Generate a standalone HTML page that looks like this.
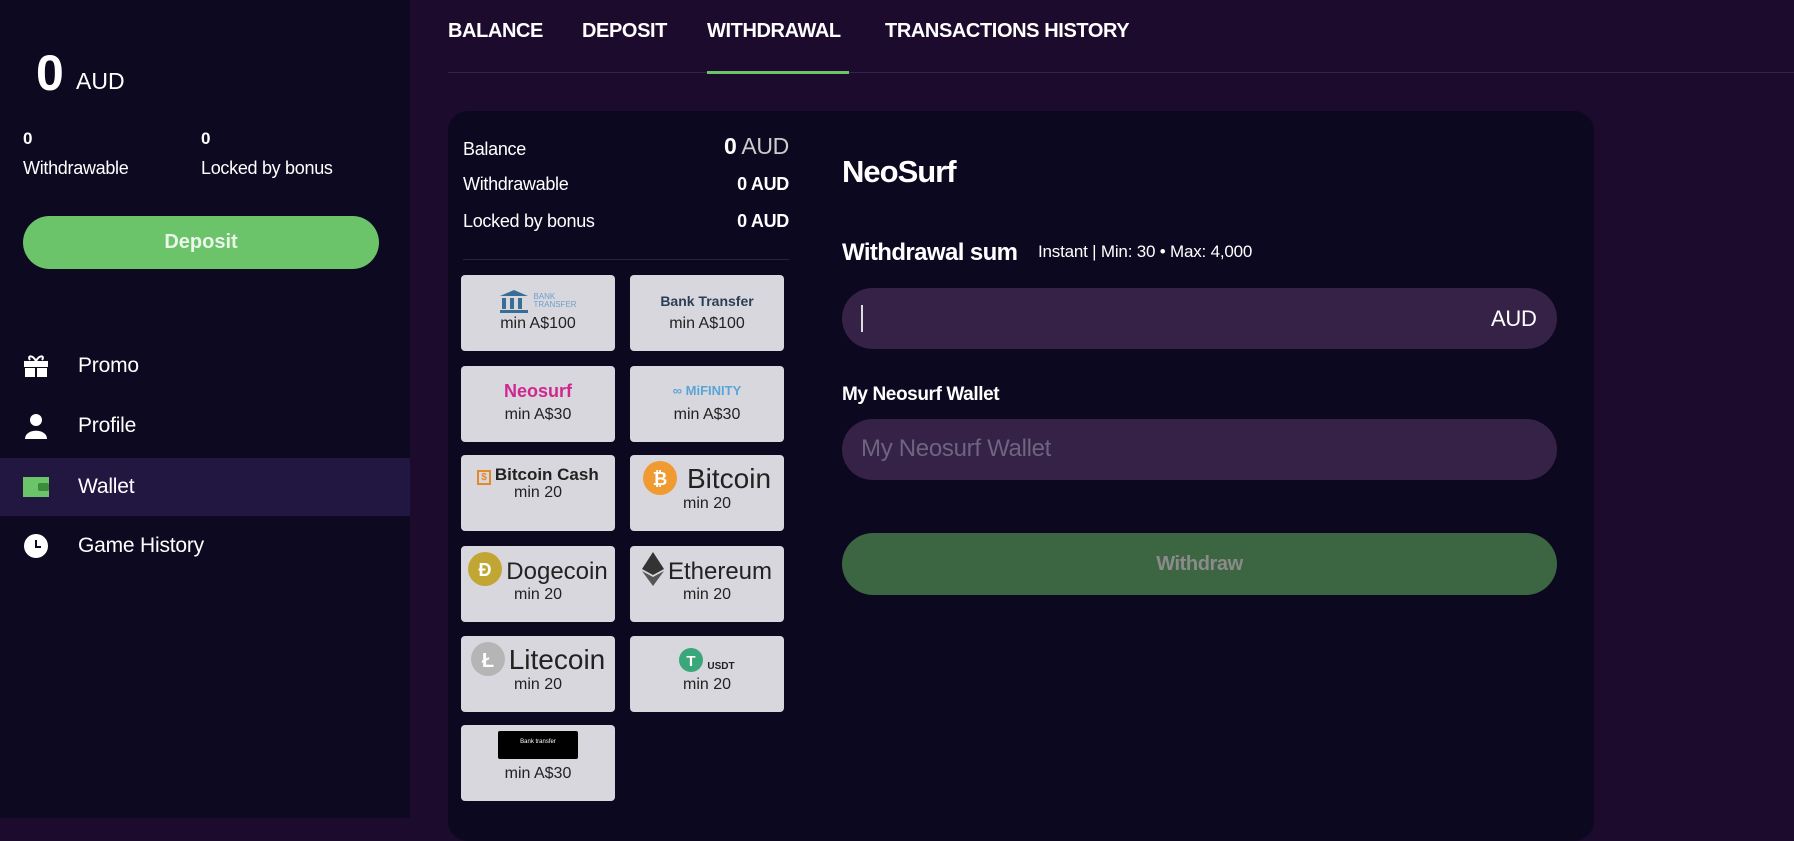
<!DOCTYPE html>
<html><head><meta charset="utf-8"><style>
*{margin:0;padding:0;box-sizing:border-box}
body{width:1794px;height:818px;overflow:hidden;background:#1d0b2d;font-family:"Liberation Sans",sans-serif;color:#fff;position:relative}
.abs{position:absolute}
.side{left:0;top:0;width:410px;height:818px;background:#0d0920}
.b{font-weight:bold}
.menu{left:0;width:410px;height:58px;display:flex;align-items:center;font-size:21px;letter-spacing:-0.2px}
.menu .ic{width:26px;margin-left:23px;margin-right:29px;display:flex;justify-content:center}
.tab{top:20px;font-size:20px;font-weight:bold;letter-spacing:-0.4px}
.card{left:448px;top:111px;width:1146px;height:730px;background:#0c0820;border-radius:20px}
.row{left:463px;width:326px;font-size:18px;letter-spacing:-0.3px;display:flex;justify-content:space-between}
.tile{width:154px;height:76px;background:#d8d7dd;border-radius:4px;color:#222;text-align:center;font-size:16px}
.tile .lg{height:38px;display:flex;align-items:flex-end;justify-content:center;gap:4px}
.tile .mn{margin-top:2px}
.inp{left:842px;width:715px;height:61px;background:#352246;border-radius:31px}
</style></head><body>
<div class="abs side"></div>
<div class="abs b" style="left:36px;top:44px;font-size:50px">0</div>
<div class="abs" style="left:76px;top:68px;font-size:23px">AUD</div>
<div class="abs b" style="left:23px;top:129px;font-size:17px">0</div>
<div class="abs" style="left:23px;top:158px;font-size:18px;letter-spacing:-0.3px">Withdrawable</div>
<div class="abs b" style="left:201px;top:129px;font-size:17px">0</div>
<div class="abs" style="left:201px;top:158px;font-size:18px;letter-spacing:-0.3px">Locked by bonus</div>
<div class="abs b" style="left:23px;top:216px;width:356px;height:53px;background:#6bc36a;border-radius:27px;display:flex;align-items:center;justify-content:center;font-size:20px;color:#eaf7ea">Deposit</div>
<div class="abs menu" style="top:337px"><span class="ic"><svg width="26" height="24"><rect x="1" y="7" width="24" height="6" fill="#fff"/><rect x="2" y="14" width="10" height="9" fill="#fff"/><rect x="14" y="14" width="10" height="9" fill="#fff"/><path d="M13 7C9 0 4 2 7 6M13 7C17 0 22 2 19 6" stroke="#fff" stroke-width="2" fill="none"/></svg></span>Promo</div>
<div class="abs menu" style="top:397px"><span class="ic"><svg width="24" height="26"><circle cx="12" cy="7" r="6" fill="#fff"/><path d="M1 26C1 15 23 15 23 26Z" fill="#fff"/></svg></span>Profile</div>
<div class="abs menu" style="top:458px;background:#221741"><span class="ic"><svg width="26" height="20"><rect width="26" height="20" fill="#6bc36a"/><rect x="15" y="6" width="11" height="8" rx="2" fill="#3c8a3c"/></svg></span>Wallet</div>
<div class="abs menu" style="top:517px"><span class="ic"><svg width="26" height="26"><circle cx="13" cy="13" r="12" fill="#fff"/><path d="M13 7V14H18" stroke="#0d0920" stroke-width="2" fill="none"/></svg></span>Game History</div>

<div class="abs tab" style="left:448px">BALANCE</div>
<div class="abs tab" style="left:582px">DEPOSIT</div>
<div class="abs tab" style="left:707px">WITHDRAWAL</div>
<div class="abs tab" style="left:885px">TRANSACTIONS HISTORY</div>
<div class="abs" style="left:448px;top:72px;width:1346px;height:1px;background:#34244a"></div>
<div class="abs" style="left:707px;top:71px;width:142px;height:3px;background:#6bc36a"></div>

<div class="abs card"></div>
<div class="abs row" style="top:139px"><span>Balance</span><span style="font-size:23px;margin-top:-6px"><b>0</b> <span style="color:#ccc">AUD</span></span></div>
<div class="abs row" style="top:174px"><span>Withdrawable</span><b>0 AUD</b></div>
<div class="abs row" style="top:211px"><span>Locked by bonus</span><b>0 AUD</b></div>
<div class="abs" style="left:463px;top:259px;width:326px;height:1px;background:#2a2340"></div>

<div class="abs tile" style="left:461px;top:275px"><div class="lg"><svg width="30" height="24"><path d="M15 1L29 7H1Z" fill="#3a6d96"/><rect x="3" y="9" width="4" height="11" fill="#3a6d96"/><rect x="11" y="9" width="4" height="11" fill="#3a6d96"/><rect x="19" y="9" width="4" height="11" fill="#3a6d96"/><rect x="1" y="21" width="28" height="3" fill="#3a6d96"/></svg><span style="font-size:8px;color:#6ea2cc;line-height:8px;text-align:left;margin-bottom:4px">BANK<br>TRANSFER</span></div><div class="mn">min A$100</div></div>
<div class="abs tile" style="left:630px;top:275px"><div class="lg" style="font-size:14px;font-weight:bold;color:#2c3e55;padding-bottom:4px">Bank Transfer</div><div class="mn">min A$100</div></div>
<div class="abs tile" style="left:461px;top:366px"><div class="lg" style="font-size:18px;font-weight:bold;color:#d0268f;padding-bottom:2px">Neosurf</div><div class="mn">min A$30</div></div>
<div class="abs tile" style="left:630px;top:366px"><div class="lg" style="font-size:13px;font-weight:bold;color:#5aa5d8;padding-bottom:6px">∞ MiFINITY</div><div class="mn">min A$30</div></div>
<div class="abs tile" style="left:461px;top:455px"><div class="lg" style="height:30px;font-size:17px;font-weight:bold"><span style="color:#e08a2c;border:2px solid #e08a2c;font-size:10px;padding:0 2px">$</span>Bitcoin Cash</div><div style="line-height:16px">min 20</div></div>
<div class="abs tile" style="left:630px;top:455px"><div class="lg" style="height:40px;font-size:28px"><svg width="34" height="34"><circle cx="17" cy="17" r="17" fill="#f09a32"/><text x="17" y="24" font-size="18" font-weight="bold" fill="#fff" text-anchor="middle" font-family="Liberation Sans">₿</text></svg><span style="margin-left:6px">Bitcoin</span></div><div>min 20</div></div>
<div class="abs tile" style="left:461px;top:546px"><div class="lg" style="height:40px;font-size:24px"><svg width="34" height="34"><circle cx="17" cy="17" r="17" fill="#c2a633"/><text x="17" y="24" font-size="18" font-weight="bold" fill="#fff" text-anchor="middle" font-family="Liberation Sans">Đ</text></svg>Dogecoin</div><div>min 20</div></div>
<div class="abs tile" style="left:630px;top:546px"><div class="lg" style="height:40px;font-size:24px"><svg width="22" height="34"><path d="M11 0L22 17L11 23L0 17Z" fill="#333"/><path d="M11 25L22 19L11 34L0 19Z" fill="#555"/></svg>Ethereum</div><div>min 20</div></div>
<div class="abs tile" style="left:461px;top:636px"><div class="lg" style="height:40px;font-size:28px"><svg width="34" height="34"><circle cx="17" cy="17" r="17" fill="#b5b5b5"/><text x="17" y="25" font-size="20" font-weight="bold" fill="#fff" text-anchor="middle" font-family="Liberation Sans">Ł</text></svg>Litecoin</div><div>min 20</div></div>
<div class="abs tile" style="left:630px;top:636px"><div class="lg" style="font-size:10px;font-weight:bold;padding-bottom:2px"><svg width="24" height="24"><circle cx="12" cy="12" r="12" fill="#3aa77a"/><text x="12" y="18" font-size="15" font-weight="bold" fill="#fff" text-anchor="middle" font-family="Liberation Sans">T</text></svg>USDT</div><div class="mn">min 20</div></div>
<div class="abs tile" style="left:461px;top:725px"><div class="lg" style="padding-bottom:4px"><div style="width:80px;height:28px;background:#000;border-radius:2px;color:#fff;font-size:6px;padding-top:8px">Bank transfer</div></div><div class="mn">min A$30</div></div>

<div class="abs b" style="left:842px;top:154px;font-size:31px;letter-spacing:-1px">NeoSurf</div>
<div class="abs b" style="left:842px;top:239px;font-size:24px;letter-spacing:-0.6px">Withdrawal sum</div>
<div class="abs" style="left:1038px;top:242px;font-size:17px;letter-spacing:-0.2px">Instant | Min: 30 • Max: 4,000</div>
<div class="abs inp" style="top:288px"></div>
<div class="abs" style="left:861px;top:305px;width:2px;height:27px;background:#ddd"></div>
<div class="abs" style="left:1491px;top:306px;font-size:22px;letter-spacing:-0.3px">AUD</div>
<div class="abs" style="left:842px;top:384px;font-size:19px;font-weight:bold;letter-spacing:-0.4px">My Neosurf Wallet</div>
<div class="abs inp" style="top:419px"></div>
<div class="abs" style="left:861px;top:435px;font-size:24px;color:#6f6480;letter-spacing:-0.3px">My Neosurf Wallet</div>
<div class="abs b" style="left:842px;top:533px;width:715px;height:62px;background:#3c6641;border-radius:31px;display:flex;align-items:center;justify-content:center;color:#8b8b8b;font-size:20px;letter-spacing:-0.4px">Withdraw</div>
</body></html>
